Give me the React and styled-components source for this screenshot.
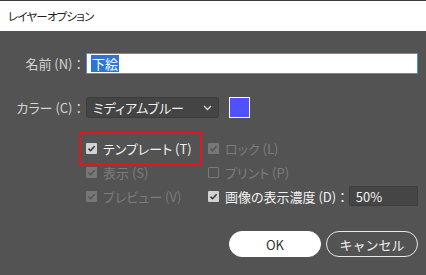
import React from "react";
import styled, { createGlobalStyle } from "styled-components";

const GlobalStyle = createGlobalStyle`
  html, body {
    margin: 0;
    padding: 0;
    background: #535353;
  }
  body {
    font-family: "Noto Sans CJK JP", "Noto Sans", sans-serif;
    font-feature-settings: "palt";
  }
`;

const Window = styled.div`
  width: 426px;
  height: 275px;
  display: flex;
  flex-direction: column;
  background: #535353;
  overflow: hidden;
`;

const TitleBar = styled.div`
  height: 30px;
  border-top: 1px solid #3a3a3a;
  background: #fff;
  display: flex;
  align-items: center;
  padding-left: 8px;
  font-size: 11.5px;
  letter-spacing: -0.8px;
  color: #1e1e1e;
`;

const Body = styled.div`
  display: flex;
  flex-direction: column;
  padding: 22px 8px 0 0;
`;

const FieldRow = styled.div`
  display: flex;
  align-items: center;
  height: 21px;
  margin-bottom: ${(p) => p.$gap || 0}px;
`;

const Label = styled.label`
  width: 82px;
  text-align: right;
  font-size: 13px;
  color: #d4d4d4;
  margin-right: 4px;
  white-space: nowrap;
`;

const Colon = styled.span`
  margin-left: 3px;
`;

const TextInput = styled.div`
  flex: 1;
  height: 21px;
  box-sizing: border-box;
  border: 1px solid #4a8fe0;
  background: #fff;
  display: flex;
  align-items: center;
  padding-left: 4px;
  font-size: 13px;
`;

const Selected = styled.span`
  background: #2e74d4;
  color: #fff;
  line-height: 17px;
  padding: 0 1px;
`;

const Select = styled.div`
  width: 133px;
  height: 21px;
  box-sizing: border-box;
  background: #444;
  border: 1px solid #3c3c3c;
  border-radius: 3px;
  display: flex;
  align-items: center;
  justify-content: space-between;
  padding: 0 6px 0 6px;
  font-size: 13px;
  color: #f0f0f0;
`;

const Swatch = styled.div`
  width: 21px;
  height: 21px;
  box-sizing: border-box;
  margin-left: 10px;
  border: 1.5px solid #fff;
  background: #5050ff;
`;

const OptionGrid = styled.div`
  display: grid;
  grid-template-columns: 122px 1fr;
  grid-auto-rows: 24px;
  margin: 18px 0 0 86px;
`;

const Option = styled.div`
  display: flex;
  align-items: center;
  font-size: 13px;
  color: ${(p) => (p.$disabled ? "#7c7c7c" : "#f2f2f2")};
  white-space: nowrap;
`;

const Highlight = styled.span`
  display: inline-flex;
  align-items: center;
  outline: 2px solid #e8141c;
  outline-offset: 5px;
  padding-right: 3px;
`;

const Box = styled.span`
  width: 11px;
  height: 11px;
  box-sizing: border-box;
  border-radius: 1px;
  margin-right: 6px;
  display: inline-flex;
  align-items: center;
  justify-content: center;
  flex-shrink: 0;
  background: ${(p) => (!p.$checked ? "transparent" : p.$disabled ? "#777" : "#d2d2d2")};
  border: ${(p) => (p.$checked ? "none" : "1px solid #7a7a7a")};
`;

const SmallInput = styled.div`
  flex: 1;
  height: 20px;
  box-sizing: border-box;
  margin-left: 3px;
  background: #454545;
  border: 1px solid #3d3d3d;
  border-radius: 2px;
  display: flex;
  align-items: center;
  padding-left: 6px;
  font-size: 13px;
  color: #f2f2f2;
`;

const Buttons = styled.div`
  display: flex;
  justify-content: flex-end;
  gap: 5px;
  margin-top: 23px;
`;

const Button = styled.button`
  width: 92px;
  height: 26px;
  box-sizing: border-box;
  border-radius: 13px;
  font-family: inherit;
  font-size: 13px;
  cursor: pointer;
  border: 1.5px solid ${(p) => (p.$primary ? "#fff" : "#e8e8e8")};
  background: ${(p) => (p.$primary ? "#fff" : "transparent")};
  color: ${(p) => (p.$primary ? "#333" : "#f0f0f0")};
`;

const Check = ({ checked, disabled }) => (
  <Box $checked={checked} $disabled={disabled}>
    {checked && (
      <svg width="9" height="9" viewBox="0 0 9 9">
        <path
          d="M1.5 4.6 L3.6 6.7 L7.6 2.3"
          fill="none"
          stroke={disabled ? "#555" : "#3a3a3a"}
          strokeWidth="1.6"
        />
      </svg>
    )}
  </Box>
);

export default function App() {
  return (
    <Window>
      <GlobalStyle />
      <TitleBar>レイヤーオプション</TitleBar>
      <Body>
        <FieldRow $gap={23}>
          <Label>
            名前 (N)<Colon>：</Colon>
          </Label>
          <TextInput>
            <Selected>下絵</Selected>
          </TextInput>
        </FieldRow>
        <FieldRow>
          <Label>
            カラー (C)<Colon>：</Colon>
          </Label>
          <Select>
            <span>ミディアムブルー</span>
            <svg width="9" height="6" viewBox="0 0 9 6">
              <path d="M1 1 L4.5 4.5 L8 1" fill="none" stroke="#ddd" strokeWidth="1.3" />
            </svg>
          </Select>
          <Swatch />
        </FieldRow>
        <OptionGrid>
          <Option>
            <Highlight>
              <Check checked />
              テンプレート (T)
            </Highlight>
          </Option>
          <Option $disabled>
            <Check checked disabled />
            ロック (L)
          </Option>
          <Option $disabled>
            <Check checked disabled />
            表示 (S)
          </Option>
          <Option $disabled>
            <Check disabled />
            プリント (P)
          </Option>
          <Option $disabled>
            <Check checked disabled />
            プレビュー (V)
          </Option>
          <Option>
            <Check checked />
            画像の表示濃度 (D)<Colon>：</Colon>
            <SmallInput>50%</SmallInput>
          </Option>
        </OptionGrid>
        <Buttons>
          <Button $primary>OK</Button>
          <Button>キャンセル</Button>
        </Buttons>
      </Body>
    </Window>
  );
}
